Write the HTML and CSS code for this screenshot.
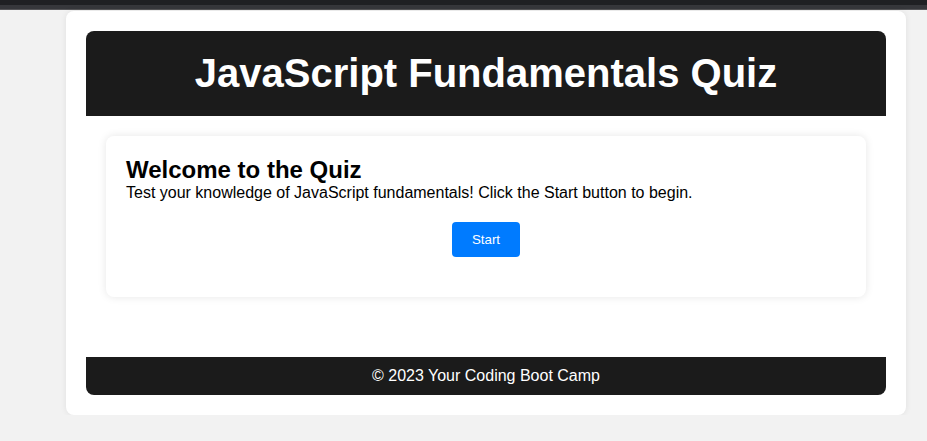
FILE: index.html
```html
<!DOCTYPE html>
<html lang="en">
<head>
<meta charset="utf-8">
<title>JavaScript Fundamentals Quiz</title>
<link rel="stylesheet" href="styles.css">
</head>
<body>
<div class="topbar"><div class="topbar-dark"></div><div class="topbar-mid"></div><div class="topbar-line"></div></div>
<div class="container">
  <header class="site-header">
    <h1>JavaScript Fundamentals Quiz</h1>
  </header>
  <main class="main">
    <section class="card">
      <h2>Welcome to the Quiz</h2>
      <p>Test your knowledge of JavaScript fundamentals! Click the Start button to begin.</p>
      <div class="actions"><button class="start-btn">Start</button></div>
    </section>
  </main>
  <footer class="site-footer">© 2023 Your Coding Boot Camp</footer>
</div>
</body>
</html>
```
FILE: styles.css
```css
html, body {
  margin: 0;
  padding: 0;
}
body {
  background: #f2f2f2;
  font-family: "Liberation Sans", Arial, sans-serif;
  color: #000;
}
.topbar-dark { height: 5px; background: #1f2023; }
.topbar-mid { height: 4px; background: #36373b; }
.topbar-line { height: 1px; background: #555558; }
.container {
  width: 800px;
  margin: 1px 0 0 66px;
  padding: 20px;
  background: #fff;
  border-radius: 8px;
  box-shadow: 0 0 6px rgba(0,0,0,0.08);
}
.site-header {
  background: #1b1b1b;
  color: #fff;
  border-radius: 8px 8px 0 0;
  padding: 19px 20px 20px;
  text-align: center;
}
.site-header h1 {
  margin: 0;
  font-size: 40px;
  line-height: 46px;
  font-weight: bold;
}
.main {
  padding: 20px 20px 60px;
}
.card {
  background: #fff;
  border-radius: 8px;
  padding: 20px;
  box-shadow: 0 0 8px rgba(0,0,0,0.1);
}
.card h2 {
  margin: 0;
  font-size: 24px;
  line-height: 28px;
}
.card p {
  margin: 0;
  font-size: 16px;
  line-height: 18px;
}
.actions {
  text-align: center;
  margin: 20px 0;
}
.start-btn {
  background: #007bff;
  color: #fff;
  border: none;
  border-radius: 4px;
  padding: 10px 20px;
  font-family: "Liberation Sans", Arial, sans-serif;
  font-size: 13.33px;
  line-height: 15px;
  cursor: pointer;
}
.site-footer {
  background: #1b1b1b;
  color: #fff;
  border-radius: 0 0 8px 8px;
  text-align: center;
  padding: 10px;
  font-size: 16px;
  line-height: 18px;
}
```
